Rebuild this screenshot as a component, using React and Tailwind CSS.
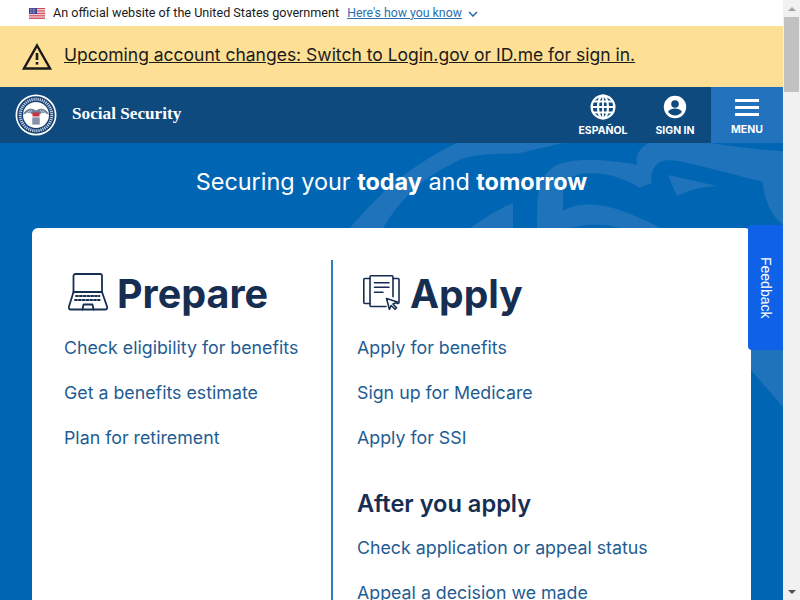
const Flag = () => (
  <svg width="16" height="11" viewBox="0 0 16 11" className="shrink-0">
    <rect width="16" height="11" fill="#fff" />
    <path d="M0 .5h16M0 2.2h16M0 3.9h16M0 5.6h16M0 7.3h16M0 9h16M0 10.6h16" stroke="#c8313e" strokeWidth="0.9" />
    <rect width="8" height="6" fill="#3c3b8e" />
    <path d="M1 1.2h6M1 3h6M1 4.8h6" stroke="#fff" strokeWidth="0.7" strokeDasharray="0.8 .7" />
  </svg>
);

const Warning = () => (
  <svg width="30" height="27" viewBox="0 0 30 27" fill="none" className="shrink-0">
    <path d="M15 2.5 28 25.5H2Z" stroke="#1b1b1b" strokeWidth="2.4" />
    <path d="M15 10v7" stroke="#1b1b1b" strokeWidth="2.6" />
    <path d="M15 19v2.6" stroke="#1b1b1b" strokeWidth="2.6" />
  </svg>
);

const Seal = () => (
  <svg width="42" height="42" viewBox="0 0 42 42" className="shrink-0">
    <circle cx="21" cy="21" r="20.5" fill="#fff" />
    <circle cx="21" cy="21" r="18.8" fill="#123f73" />
    <circle cx="21" cy="21" r="13" fill="#fff" />
    <circle cx="21" cy="21" r="15.8" fill="none" stroke="#c3d0e0" strokeWidth="3" strokeDasharray="1.2 .9" />
    <path d="M8 21c2-6 8-8 13-4.500 5-3.500 11-1.500 13 4.500-3-2-5.500-2.500-8-1.500l-5 2-5-2c-2.500-1-5-.5-8 1.500Z" fill="#6d7f99" />
    <path d="M11 19.500l4-3M14 19.500l3-3.500M31 19.500l-4-3M28 19.500l-3-3.500" stroke="#fff" strokeWidth="0.6" />
    <rect x="17.500" y="18.500" width="7" height="4" fill="#c8313e" />
    <path d="M17.500 23.500h7v7h-7Z" fill="#41597e" />
    <path d="M19 23.500v7M21 23.500v7M23 23.500v7" stroke="#fff" strokeWidth="0.7" />
  </svg>
);

const GlobeIcon = () => (
  <svg width="26" height="26" viewBox="0 0 26 26" fill="none" stroke="#fff" strokeWidth="2.200">
    <circle cx="13" cy="13" r="11.400" />
    <ellipse cx="13" cy="13" rx="5" ry="11.400" />
    <path d="M13 1.600v22.800M1.600 13h22.800M3.500 7.500h19M3.500 18.500h19" strokeWidth="1.800" />
  </svg>
);

const SignIn = () => (
  <svg width="24" height="24" viewBox="0 0 24 24" fill="#fff">
    <path d="M12 .8a11.200 11.200 0 1 0 0 22.400A11.200 11.200 0 0 0 12 .8Zm0 4.400a3.800 3.800 0 1 1 0 7.600 3.800 3.800 0 0 1 0-7.600Zm0 15.300a8.500 8.500 0 0 1-6.800-3.500c.1-2.300 4.500-3.500 6.800-3.500s6.700 1.200 6.800 3.500a8.500 8.500 0 0 1-6.800 3.500Z" />
  </svg>
);

const Laptop = () => (
  <svg width="40" height="38" viewBox="0 0 40 38" fill="none" stroke="#162e51" strokeWidth="1.800" strokeLinejoin="round" strokeLinecap="round">
    <path d="M5.500 19V3a2 2 0 0 1 2-2h24.500a2 2 0 0 1 2 2v16" />
    <path d="M5.500 19h28.500l5 14.500a2 2 0 0 1-2 3H3a2 2 0 0 1-2-3Z" />
    <path d="M8 23h23.500M7 27h26" strokeDasharray="2 1.800" />
    <path d="M14.500 36.500l1-5h9l1 5" />
  </svg>
);

const Docs = () => (
  <svg width="37" height="35" viewBox="0 0 37 35" fill="none" stroke="#162e51" strokeWidth="1.600" strokeLinejoin="round" strokeLinecap="round">
    <path d="M7 3.500H1.800a1 1 0 0 0-1 1v23a1 1 0 0 0 1 1H7" />
    <path d="M30 3.500h5a1 1 0 0 1 1 1v23a1 1 0 0 1-1 1h-1" />
    <path d="M23 31.500H8a1 1 0 0 1-1-1V1.800a1 1 0 0 1 1-1h21a1 1 0 0 1 1 1v20" />
    <path d="M11.500 7.700h14.500M11.500 12.300h14.500M11.500 17.300h8.500" />
    <path d="M23.500 23.500l11 3.500-4.500 2 3.500 3.800-1.500 1.500-3.800-3.800-1.800 3.800Z" fill="#fff" />
  </svg>
);

// hero watermark, coordinates are page pixels
const HeroArt = () => (
  <svg viewBox="340 143 443 457" width="443" height="457" className="absolute left-[340px] top-0" fill="#1f73ba">
    <path d="M350 228C370 205 400 170 457 143H563L520 153C495 155 470 152 450 165 420 180 400 200 383 228Z" />
    <path d="M470 228C485 218 498 209 513 203V228Z" />
    <path d="M537 228C537 195 538 178 552 168 565 158 600 158 637 165 635 155 640 148 648 143H710C730 146 760 150 783 151V225C770 215 763 195 763 182 740 176 710 168 683 162 672 160 660 158 654 168 650 175 651 180 652 183 645 185 642 187 640 188 625 178 600 170 580 174 570 176 563 182 563 190V211C575 203 595 203 613 208 630 213 650 222 660 228H620C610 225 600 224 587 225 580 226 575 227 570 228Z" />
    <path d="M668 175 717 186C700 187 690 190 677 196Z" />
    <path d="M751 348H783V407L751 370Z" />
  </svg>
);

const Links = ({ items }) => (
  <div className="flex flex-col gap-[18px]">
    {items.map((t) => (
      <a key={t} className="text-[17.8px] leading-[27px] text-[#1f5c93] whitespace-nowrap">{t}</a>
    ))}
  </div>
);

const Scrollbar = () => (
  <div className="w-[17px] shrink-0 bg-[#f1f1f1] flex flex-col items-center">
    <div className="h-[17px] flex items-center justify-center">
      <div className="w-0 h-0 border-x-[4px] border-x-transparent border-b-[4px] border-b-[#a3a3a3]" />
    </div>
    <div className="w-[15px] h-[75px] bg-[#c1c1c1]" />
    <div className="flex-1" />
    <div className="h-[17px] flex items-center justify-center">
      <div className="w-0 h-0 border-x-[4px] border-x-transparent border-t-[4px] border-t-[#505050]" />
    </div>
  </div>
);

export default function App() {
  return (
    <div className="relative flex h-[600px] w-[800px] overflow-hidden bg-white font-['Inter',sans-serif]">
      <div className="flex-1 min-w-0 flex flex-col">
        <div className="h-[26px] shrink-0 flex items-center pl-[29px] gap-2 text-[12.6px] text-[#1b1b1b] font-['Roboto',sans-serif]">
          <Flag />
          <span>An official website of the United States government</span>
          <a className="text-[12.3px] text-[#2a6fb0] underline">Here's how you know</a>
          <svg width="10" height="6" viewBox="0 0 10 6" fill="none" stroke="#2a6fb0" strokeWidth="1.600" className="mt-[2px] -ml-[2px]"><path d="M1 1l4 4 4-4" /></svg>
        </div>

        <div className="h-[61px] shrink-0 bg-[#fddf95] flex items-center pl-[22px] gap-[12px]">
          <Warning />
          <a className="mb-[2px] text-[17.5px] text-[#1b1b1b] underline whitespace-nowrap">Upcoming account changes: Switch to Login.gov or ID.me for sign in.</a>
        </div>

        <div className="h-[56px] shrink-0 bg-[#0f4a7f] flex items-center pl-[15px] text-white">
          <Seal />
          <span className="ml-[15px] mb-[2px] font-['Liberation_Serif',serif] font-bold text-[17.2px]">Social Security</span>
          <div className="ml-auto flex h-full items-stretch">
            <div className="w-[82px] flex flex-col items-center pt-[7px] gap-[5px] mr-[-4px]">
              <GlobeIcon />
              <span className="text-[10.5px] font-bold leading-3">ESPAÑOL</span>
            </div>
            <div className="w-[70px] flex flex-col items-center pt-[8px] gap-[5px] mr-[1px]">
              <SignIn />
              <span className="text-[10.5px] font-bold leading-3 mt-[1px]">SIGN IN</span>
            </div>
            <div className="w-[72px] bg-[#2272bd] flex flex-col items-center pt-[12px]">
              <div className="w-[24px] flex flex-col gap-[4px]">
                <div className="h-[3px] bg-white" />
                <div className="h-[3px] bg-white" />
                <div className="h-[3px] bg-white" />
              </div>
              <span className="text-[10.5px] font-bold leading-3 mt-[8px]">MENU</span>
            </div>
          </div>
        </div>

        <div className="relative flex-1 min-h-0 overflow-hidden bg-[#0066b3] px-[32px]">
          <HeroArt />
          <h1 className="relative pt-[24px] h-[85px] text-center text-[23.4px] leading-[30px] text-white">
            Securing your <b className="font-bold">today</b> and <b className="font-bold">tomorrow</b>
          </h1>
          <div className="relative bg-white rounded-t-[6px] h-[500px] pt-[32px] pl-[32px] flex">
            <div className="w-[267px] shrink-0">
              <div className="flex items-center h-[68px] mb-[6px]">
                <div className="ml-[4px] mr-[9px] -mt-[5px]"><Laptop /></div>
                <h2 className="text-[39.5px] leading-[50px] font-bold text-[#162e51]">Prepare</h2>
              </div>
              <Links items={['Check eligibility for benefits', 'Get a benefits estimate', 'Plan for retirement']} />
            </div>
            <div className="w-[2px] shrink-0 bg-[#2f7cc0]" />
            <div className="pl-[24px]">
              <div className="flex items-center h-[68px] mb-[6px]">
                <div className="ml-[6px] mr-[10px] -mt-[4px]"><Docs /></div>
                <h2 className="text-[39px] leading-[50px] font-bold text-[#162e51]">Apply</h2>
              </div>
              <Links items={['Apply for benefits', 'Sign up for Medicare', 'Apply for SSI']} />
              <h3 className="mt-[38px] mb-[15px] text-[23.6px] leading-[30px] font-semibold text-[#162e51]">After you apply</h3>
              <Links items={['Check application or appeal status', 'Appeal a decision we made']} />
            </div>
          </div>
        </div>
      </div>
      <Scrollbar />

      <div className="absolute left-[748px] top-[225px] w-[35px] h-[125px] bg-[#0f62e8] rounded-l-[4px] flex items-center justify-center">
        <span className="[writing-mode:vertical-rl] font-['Liberation_Sans',sans-serif] text-[14px] text-white">Feedback</span>
      </div>
    </div>
  );
}
